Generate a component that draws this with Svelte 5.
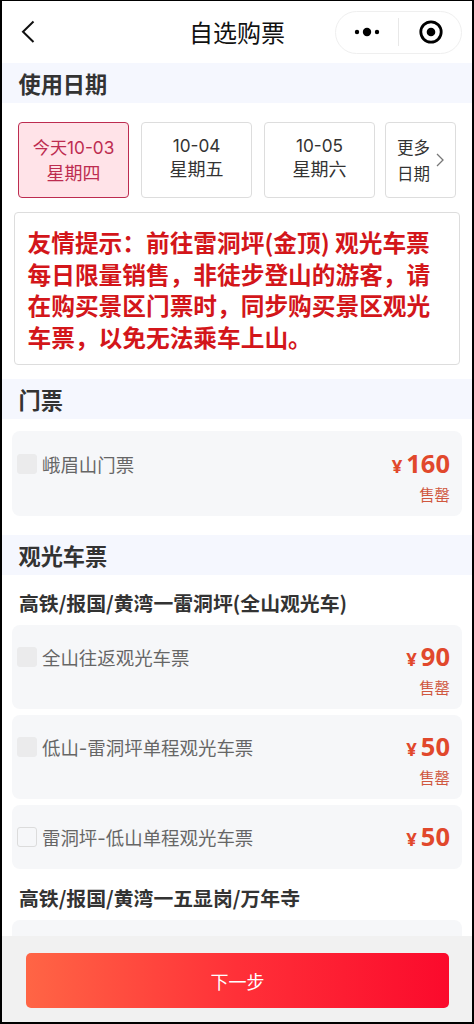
<script lang="ts">
	interface Ticket {
		name: string;
		price: number;
		soldOut: boolean;
	}

	const days = [
		{ date: '今天10-03', week: '星期四' },
		{ date: '10-04', week: '星期五' },
		{ date: '10-05', week: '星期六' }
	];

	const entrance: Ticket[] = [{ name: '峨眉山门票', price: 160, soldOut: true }];

	const bus: Ticket[] = [
		{ name: '全山往返观光车票', price: 90, soldOut: true },
		{ name: '低山-雷洞坪单程观光车票', price: 50, soldOut: true },
		{ name: '雷洞坪-低山单程观光车票', price: 50, soldOut: false }
	];

	let selected = $state(0);
	let picked: string[] = $state([]);

	function toggle(name: string) {
		picked = picked.includes(name) ? picked.filter((n) => n !== name) : [...picked, name];
	}
</script>

{#snippet ticketList(tickets: Ticket[])}
	<div class="tickets">
		{#each tickets as t}
			<div class="ticket" class:sold={t.soldOut}>
				<button
					class="check"
					class:on={picked.includes(t.name)}
					disabled={t.soldOut}
					aria-label={t.name}
					onclick={() => toggle(t.name)}
				></button>
				<span class="name">{t.name}</span>
				<div class="cost">
					<div class="price"><span class="yen">¥</span>{t.price}</div>
					{#if t.soldOut}<div class="status">售罄</div>{/if}
				</div>
			</div>
		{/each}
	</div>
{/snippet}

<div class="screen">
	<header>
		<svg class="back" viewBox="0 0 14 24" aria-hidden="true">
			<path d="M12.5 1.5 2 11.7 12.5 22" />
		</svg>
		<h1>自选购票</h1>
		<div class="capsule">
			<svg viewBox="0 0 26 10" width="26" height="10" aria-hidden="true">
				<circle cx="3" cy="5" r="2.2" />
				<circle cx="13" cy="5" r="4.2" />
				<circle cx="23" cy="5" r="2.2" />
			</svg>
			<i></i>
			<svg class="close" viewBox="0 0 24 24" width="24" height="24" aria-hidden="true">
				<circle class="ring" cx="12" cy="12" r="10.2" />
				<circle cx="12" cy="12" r="4.3" />
			</svg>
		</div>
	</header>

	<main>
		<h2>使用日期</h2>
		<div class="days">
			{#each days as d, i}
				<button class="day" class:active={selected === i} onclick={() => (selected = i)}>
					<span class="date">{d.date}</span>
					<span>{d.week}</span>
				</button>
			{/each}
			<button class="more">
				<span>更多<br />日期</span>
				<svg viewBox="0 0 8 14" width="8" height="14" aria-hidden="true">
					<path d="M1 1l6 6-6 6" />
				</svg>
			</button>
		</div>
		<p class="notice">
			友情提示：前往雷洞坪(金顶) 观光车票<br />每日限量销售，非徒步登山的游客，请<br
			/>在购买景区门票时，同步购买景区观光<br />车票，以免无法乘车上山。
		</p>

		<h2>门票</h2>
		<div class="gate">
			{@render ticketList(entrance)}
		</div>

		<h2>观光车票</h2>
		<h3>高铁/报国/黄湾一雷洞坪(全山观光车)</h3>
		{@render ticketList(bus)}
		<h3 class="next">高铁/报国/黄湾一五显岗/万年寺</h3>
		<div class="tickets">
			<div class="ticket"></div>
		</div>
	</main>

	<footer>
		<button class="submit">下一步</button>
	</footer>
</div>

<style>
	:global(body) {
		margin: 0;
	}
	.screen {
		box-sizing: border-box;
		display: flex;
		flex-direction: column;
		height: 1024px;
		border: solid #000;
		border-width: 1px 2px 2px;
		background: #fff;
		color: #333;
		font-family: 'Noto Sans CJK SC', sans-serif;
		overflow: hidden;
	}
	button {
		box-sizing: border-box;
		padding: 0;
		font-family: inherit;
		color: inherit;
		background: none;
	}
	header {
		flex: none;
		display: grid;
		grid-template-columns: 1fr auto 1fr;
		align-items: center;
		height: 62px;
		padding: 0 10px 0 19px;
	}
	.back {
		width: 14px;
		height: 24px;
		fill: none;
		stroke: #111;
		stroke-width: 2;
	}
	h1 {
		margin: 0;
		padding-right: 9px;
		font-size: 24px;
		font-weight: 400;
		line-height: 34px;
		color: #111;
	}
	.capsule {
		justify-self: end;
		box-sizing: border-box;
		display: grid;
		grid-template-columns: 1fr 1px 1fr;
		place-items: center;
		width: 127px;
		height: 43px;
		border: 1px solid #efefef;
		border-radius: 22px;
	}
	.capsule i {
		width: 1px;
		height: 28px;
		background: #e8e8e8;
	}
	.capsule .close {
		margin-left: 2px;
	}
	.capsule .ring {
		fill: none;
		stroke: #000;
		stroke-width: 2.8;
	}
	main {
		flex: 1;
		min-height: 0;
		overflow: hidden;
	}
	h2 {
		margin: 0;
		padding-left: 16.5px;
		height: 40px;
		font-size: 22.2px;
		line-height: 40px;
		background: #f5f7fe;
	}
	.days {
		display: grid;
		grid-template-columns: 111px 111px 111px 71px;
		column-gap: 12px;
		height: 76px;
		margin: 19px 16px 14px;
	}
	.day,
	.more {
		display: flex;
		align-items: center;
		border: 1px solid #ddd;
		border-radius: 4px;
	}
	.day {
		flex-direction: column;
		padding-top: 11px;
		font-size: 18px;
		line-height: 23px;
	}
	.date {
		font-family: Inter, 'Noto Sans CJK SC', sans-serif;
		font-size: 17.2px;
	}
	.day.active {
		padding-top: 12px;
		line-height: 25px;
		color: #bd2c50;
		border-color: #bd2c50;
		background: #ffe3e8;
	}
	.more {
		justify-content: center;
		gap: 6px;
		margin-left: -2px;
		width: 71px;
		font-size: 16.5px;
		line-height: 26px;
	}
	.more svg {
		fill: none;
		stroke: #777;
		stroke-width: 1.3;
	}
	.notice {
		box-sizing: border-box;
		height: 153px;
		margin: 0 12px 14px;
		padding: 14px 0 0 12.5px;
		border: 1px solid #ddd;
		border-radius: 4px;
		font-size: 23.7px;
		font-weight: 700;
		line-height: 31.5px;
		white-space: nowrap;
		color: #d3161a;
	}
	.gate {
		padding: 12px 0 19.5px;
	}
	.tickets {
		display: grid;
		gap: 5.5px;
		padding: 0 10px;
	}
	.ticket {
		box-sizing: border-box;
		display: flex;
		align-items: flex-start;
		height: 64px;
		padding: 17.5px 12px 0 5px;
		border-radius: 8px;
		background: #f6f7f9;
	}
	.ticket.sold {
		height: 84.5px;
	}
	.check {
		flex: none;
		width: 20px;
		height: 20px;
		margin: 5px 5px 0 0;
		border: 1px solid #dcdcdc;
		border-radius: 3px;
	}
	.sold .check {
		border-color: #ebebec;
		background: #ebebec;
	}
	.check.on {
		border-color: #e1482c;
		background: #e1482c;
	}
	.name {
		flex: 1;
		font-family: Inter, 'Noto Sans CJK SC', sans-serif;
		font-size: 18.45px;
		line-height: 32px;
		color: #666;
	}
	.cost {
		text-align: right;
		color: #e1482c;
	}
	.price {
		font-family: 'Noto Sans', 'Noto Sans CJK SC', sans-serif;
		font-size: 25.5px;
		font-weight: 700;
		line-height: 29px;
	}
	.yen {
		margin-right: 4px;
		font-size: 18.5px;
	}
	.status {
		font-size: 15.4px;
		line-height: 28px;
		color: #d0583f;
	}
	h3 {
		margin: 0;
		padding: 4.5px 0 0 17px;
		font-size: 19.85px;
		line-height: 45px;
		white-space: nowrap;
	}
	h3.next {
		padding-top: 6px;
	}
	footer {
		flex: none;
		box-sizing: border-box;
		height: 86px;
		padding: 17px 24px 0;
		background: #f1f1f1;
	}
	.submit {
		display: block;
		width: 423px;
		height: 55px;
		border: 0;
		border-radius: 5px;
		font-size: 18px;
		color: #fff;
		background: linear-gradient(90deg, #ff6545, #ff3038 50%, #fb0a2c);
	}
</style>
